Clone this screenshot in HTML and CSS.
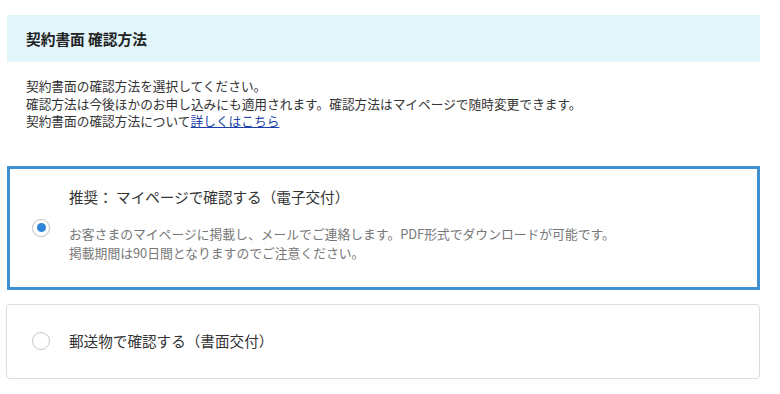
FILE: index.html
```html
<!DOCTYPE html>
<html lang="ja">
<head>
<meta charset="utf-8">
<link rel="stylesheet" href="styles.css">
</head>
<body>
<div class="page">
  <div class="head"><h2 class="head-title">契約書面 確認方法</h2></div>
  <div class="intro">
    <p>契約書面の確認方法を選択してください。</p>
    <p>確認方法は今後ほかのお申し込みにも適用されます。確認方法はマイページで随時変更できます。</p>
    <p>契約書面の確認方法について<a class="link" href="#">詳しくはこちら</a></p>
  </div>
  <div class="options">
    <label class="card card-selected">
      <span class="radio radio-on"><span class="dot"></span></span>
      <span class="card-body card-body-tall">
        <span class="card-title">推奨： マイページで確認する（電子交付）</span>
        <span class="card-desc">
          <span class="desc-line">お客さまのマイページに掲載し、メールでご連絡します。PDF形式でダウンロードが可能です。</span>
          <span class="desc-line">掲載期間は90日間となりますのでご注意ください。</span>
        </span>
      </span>
    </label>
    <label class="card card-plain">
      <span class="radio"></span>
      <span class="card-body">
        <span class="card-title">郵送物で確認する（書面交付）</span>
      </span>
    </label>
  </div>
</div>
</body>
</html>
```
FILE: styles.css
```css
html, body {
  margin: 0;
  padding: 0;
  background: #ffffff;
}
body {
  font-family: "Noto Sans CJK JP", "Noto Sans", sans-serif;
  color: #333333;
}
.page {
  width: 753px;
  margin-left: 7px;
  padding-top: 15px;
}
.head {
  background: #e1f5fb;
  height: 47px;
  display: flex;
  align-items: center;
  padding-left: 19px;
}
.head-title {
  margin: 0;
  font-size: 14.7px;
  font-weight: bold;
  color: #222222;
}
.intro {
  padding: 15px 0 0 19px;
  font-size: 12.7px;
  line-height: 17.5px;
  color: #333333;
}
.intro p {
  margin: 0;
}
.link {
  color: #1c3fa8;
  text-decoration: underline;
}
.options {
  margin-top: 36px;
  display: flex;
  flex-direction: column;
  gap: 14px;
}
.card {
  display: flex;
  align-items: center;
  box-sizing: border-box;
  background: #ffffff;
}
.card-selected {
  height: 124px;
  border: 3px solid #3f91d1;
  padding-left: 22px;
}
.card-plain {
  height: 75px;
  border: 1px solid #dddddd;
  border-radius: 4px;
  padding-left: 25px;
  margin-left: -1px;
}
.radio {
  width: 18px;
  height: 18px;
  box-sizing: border-box;
  border: 1px solid #c8c8c8;
  border-radius: 50%;
  background: #ffffff;
  display: flex;
  align-items: center;
  justify-content: center;
  flex: none;
}
.radio-on {
  box-shadow: 0 0 1px rgba(0,0,0,0.15);
}
.dot {
  width: 9px;
  height: 9px;
  border-radius: 50%;
  background: #2f86d6;
}
.card-body {
  display: flex;
  flex-direction: column;
  margin-left: 19px;
}
.card-body-tall {
  padding-bottom: 6px;
}
.card-title {
  font-size: 14.6px;
  line-height: 20px;
  color: #333333;
}
.card-desc {
  margin-top: 18px;
  display: flex;
  flex-direction: column;
  gap: 0;
  font-size: 12.8px;
  line-height: 18.5px;
  color: #777777;
}
.desc-line {
  display: block;
}
```
